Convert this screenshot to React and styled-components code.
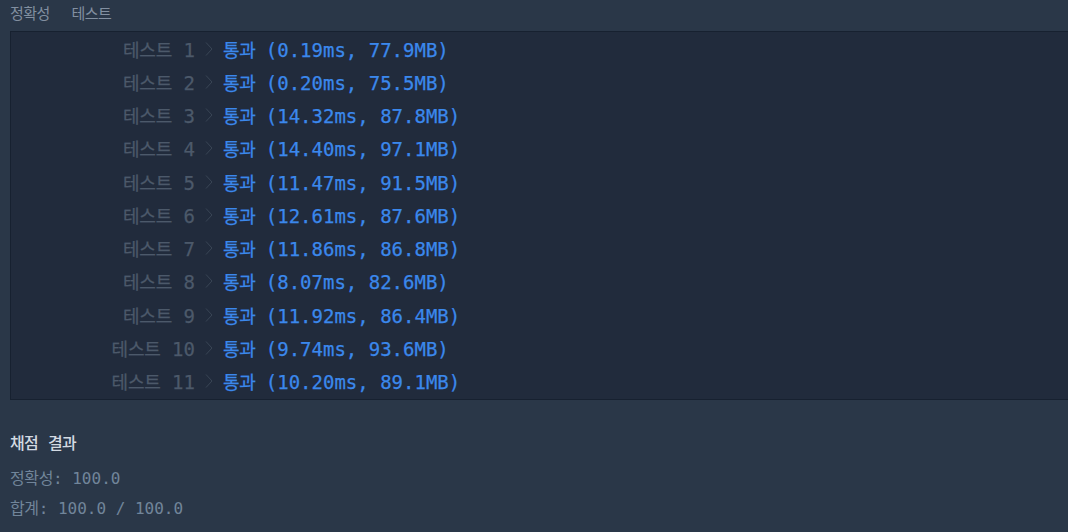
import React from "react";
import styled, { createGlobalStyle } from "styled-components";

const Global = createGlobalStyle`
  html, body { margin: 0; padding: 0; background: #2a3748; overflow: hidden; }
  body { width: 1068px; height: 532px; }
`;

const Page = styled.div`
  display: flex;
  flex-direction: column;
  width: 1068px;
  height: 532px;
  background: #2a3748;
`;

const TabBar = styled.div`
  display: flex;
  align-items: center;
  gap: 22px;
  height: 31px;
  padding: 0 0 7px 10px;
  box-sizing: border-box;
`;

const Tab = styled.span`
  font-family: "Noto Sans CJK KR", "Noto Sans", sans-serif;
  font-size: 15px;
  color: #828fa0;
  letter-spacing: -0.6px;
`;

const Console = styled.div`
  margin-left: 10px;
  padding-bottom: 1.5px;
  background: #212b3c;
  border: 1px solid #172130;
  border-right: none;
  display: flex;
  flex-direction: column;
`;

const Row = styled.div`
  display: grid;
  grid-template-columns: 184px 28px auto;
  align-items: center;
  height: 33.25px;
  font-family: "DejaVu Sans Mono", "Noto Sans CJK KR", monospace;
  font-size: 19px;
  white-space: pre;
  -webkit-text-stroke: 0.25px currentColor;
`;

const Label = styled.span`
  text-align: right;
  color: #4c596a;
`;

const Chevron = styled.svg`
  margin-left: 10px;
  display: block;
`;

const Result = styled.span`
  display: flex;
  align-items: baseline;
  color: ${(p) => (p.$passed ? "#3b88ec" : "#e85a5a")};
`;

const Detail = styled.span`
  margin-left: 10px;
`;

const Ko = styled.span`
  font-family: "Noto Sans CJK KR", sans-serif;
  font-size: ${(p) => p.$size || "18px"};
  letter-spacing: ${(p) => p.$ls || "-0.2px"};
`;

const Summary = styled.div`
  display: flex;
  flex-direction: column;
  padding: 0 10px;
  font-family: "DejaVu Sans Mono", "Noto Sans CJK KR", monospace;
  font-size: 16px;
  white-space: pre;
`;

const SummaryTitle = styled.div`
  margin-top: 27px;
  height: 30px;
  line-height: 30px;
  color: #d3dae2;
  font-weight: 500;
`;

const SummaryLine = styled.div`
  margin-top: ${(p) => p.$gap || "0px"};
  height: 30px;
  line-height: 30px;
  color: #71859a;
`;

const tests = [
  ["0.19ms", "77.9MB"],
  ["0.20ms", "75.5MB"],
  ["14.32ms", "87.8MB"],
  ["14.40ms", "97.1MB"],
  ["11.47ms", "91.5MB"],
  ["12.61ms", "87.6MB"],
  ["11.86ms", "86.8MB"],
  ["8.07ms", "82.6MB"],
  ["11.92ms", "86.4MB"],
  ["9.74ms", "93.6MB"],
  ["10.20ms", "89.1MB"],
];

export default function App() {
  return (
    <Page>
      <Global />
      <TabBar>
        <Tab>정확성</Tab>
        <Tab>테스트</Tab>
      </TabBar>
      <Console>
        {tests.map(([t, m], i) => (
          <Row key={i}>
            <Label>
              <Ko>테스트</Ko> {i + 1}
            </Label>
            <Chevron width="8" height="16" viewBox="0 0 8 16">
              <polyline
                points="1,1.5 7,8 1,14.5"
                fill="none"
                stroke="#394555"
                strokeWidth="1"
              />
            </Chevron>
            <Result $passed>
              <Ko>통과</Ko>
              <Detail>({t}, {m})</Detail>
            </Result>
          </Row>
        ))}
      </Console>
      <Summary>
        <SummaryTitle>
          <Ko $size="16px" $ls="-0.6px">채점</Ko> <Ko $size="16px" $ls="-0.6px">결과</Ko>
        </SummaryTitle>
        <SummaryLine $gap="5px">
          <Ko $size="16px" $ls="-0.4px">정확성</Ko>: 100.0
        </SummaryLine>
        <SummaryLine>
          <Ko $size="16px" $ls="-0.4px">합계</Ko>: 100.0 / 100.0
        </SummaryLine>
      </Summary>
    </Page>
  );
}
